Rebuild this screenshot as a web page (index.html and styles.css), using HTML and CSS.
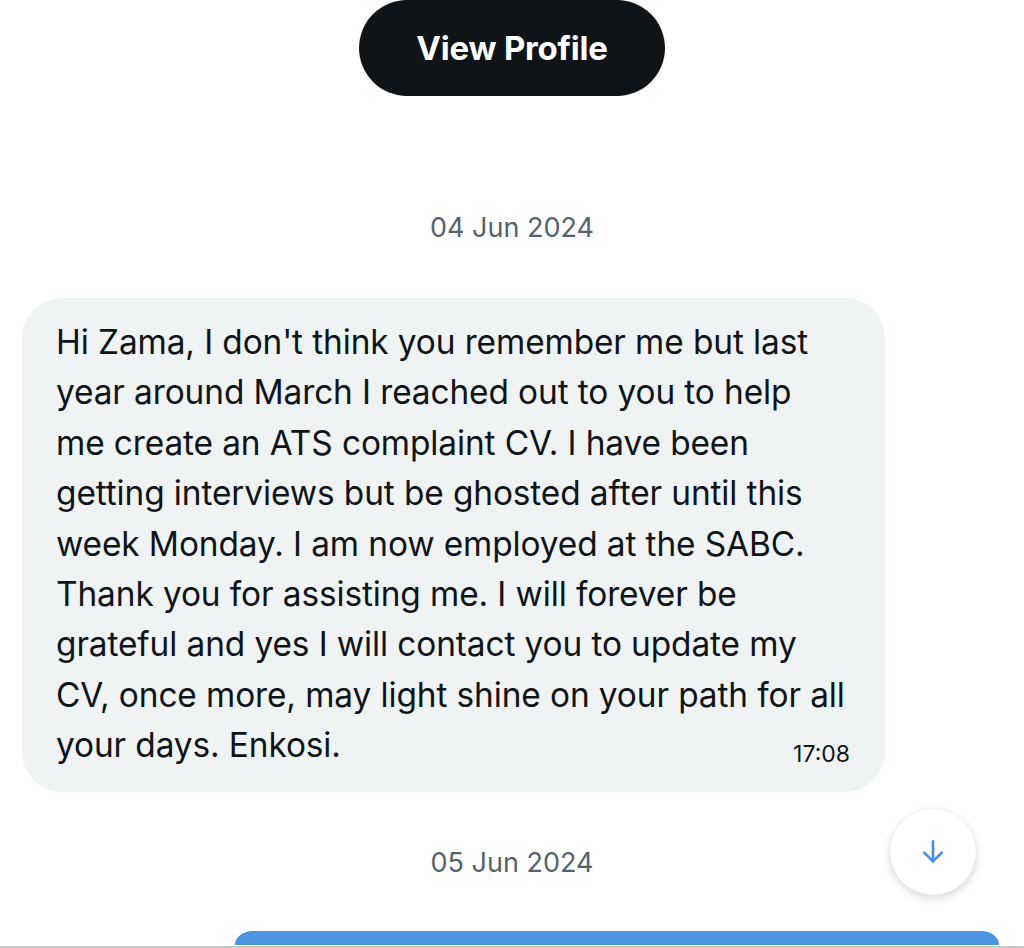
FILE: index.html
```html
<!DOCTYPE html>
<html lang="en">
<head>
<meta charset="utf-8">
<title>Messages</title>
<link rel="stylesheet" href="styles.css">
</head>
<body>
<main class="chat">
  <div class="profile-row">
    <button class="profile-btn">View Profile</button>
  </div>
  <div class="date-sep first">04 Jun 2024</div>
  <div class="bubble">
    <p class="msg">Hi Zama, I don't think you remember me but last<br>year around March I reached out to you to help<br>me create an ATS complaint CV. I have been<br>getting interviews but be ghosted after until this<br>week Monday. I am now employed at the SABC.<br>Thank you for assisting me. I will forever be<br>grateful and yes I will contact you to update my<br>CV, once more, may light shine on your path for all<br>your days. Enkosi.<span class="time">17:08</span></p>
  </div>
  <div class="date-sep second">05 Jun 2024</div>
  <div class="sent-bar"></div>
  <button class="fab" aria-label="Scroll to bottom">
    <svg width="30" height="30" viewBox="0 0 24 24" fill="none" stroke="currentColor" stroke-width="2.2" stroke-linecap="round" stroke-linejoin="round"><path d="M12 3.5v16"/><path d="M5 12.5l7 7 7-7"/></svg>
  </button>
</main>
</body>
</html>
```
FILE: styles.css
```css
html, body {
  margin: 0;
  padding: 0;
  background: #ffffff;
}
body {
  width: 1024px;
  height: 948px;
  overflow: hidden;
  font-family: "Inter", "Roboto", "Liberation Sans", sans-serif;
  color: #0f1419;
}
.chat {
  position: relative;
  height: 946px;
  border-bottom: 2px solid #c9c9c9;
  display: flex;
  flex-direction: column;
  overflow: hidden;
}
.profile-row {
  display: flex;
  justify-content: center;
}
.profile-btn {
  width: 306px;
  height: 96px;
  border: none;
  border-radius: 48px;
  background: #0f1419;
  color: #ffffff;
  font-family: inherit;
  font-size: 33px;
  font-weight: 700;
  letter-spacing: -0.2px;
  padding: 0;
}
.date-sep {
  text-align: center;
  color: #536471;
  font-size: 27px;
  line-height: 32px;
}
.date-sep.first {
  margin-top: 116px;
}
.bubble {
  margin: 54px 0 0 22px;
  width: 863px;
  box-sizing: border-box;
  background: #eff3f4;
  border-radius: 40px;
  padding: 19px 20px 21px 34px;
}
.msg {
  margin: 0;
  font-size: 33.4px;
  line-height: 50.4px;
  letter-spacing: -0.1px;
  white-space: nowrap;
}
.time {
  float: right;
  font-size: 23px;
  line-height: 28px;
  margin-top: 20px;
  margin-right: 15px;
  letter-spacing: 0;
}
.date-sep.second {
  margin-top: 55px;
}
.sent-bar {
  margin: 52px 0 0 235px;
  width: 764px;
  height: 14px;
  background: #4a94e0;
  border-radius: 26px 26px 0 0 / 20px 20px 0 0;
}
.fab {
  position: absolute;
  left: 890px;
  top: 809px;
  width: 86px;
  height: 86px;
  border-radius: 50%;
  border: none;
  background: #ffffff;
  box-shadow: 0 3px 10px rgba(0, 0, 0, 0.16), 0 0 2px rgba(0, 0, 0, 0.06);
  color: #4a90e2;
  display: flex;
  align-items: center;
  justify-content: center;
  padding: 0;
}
```
